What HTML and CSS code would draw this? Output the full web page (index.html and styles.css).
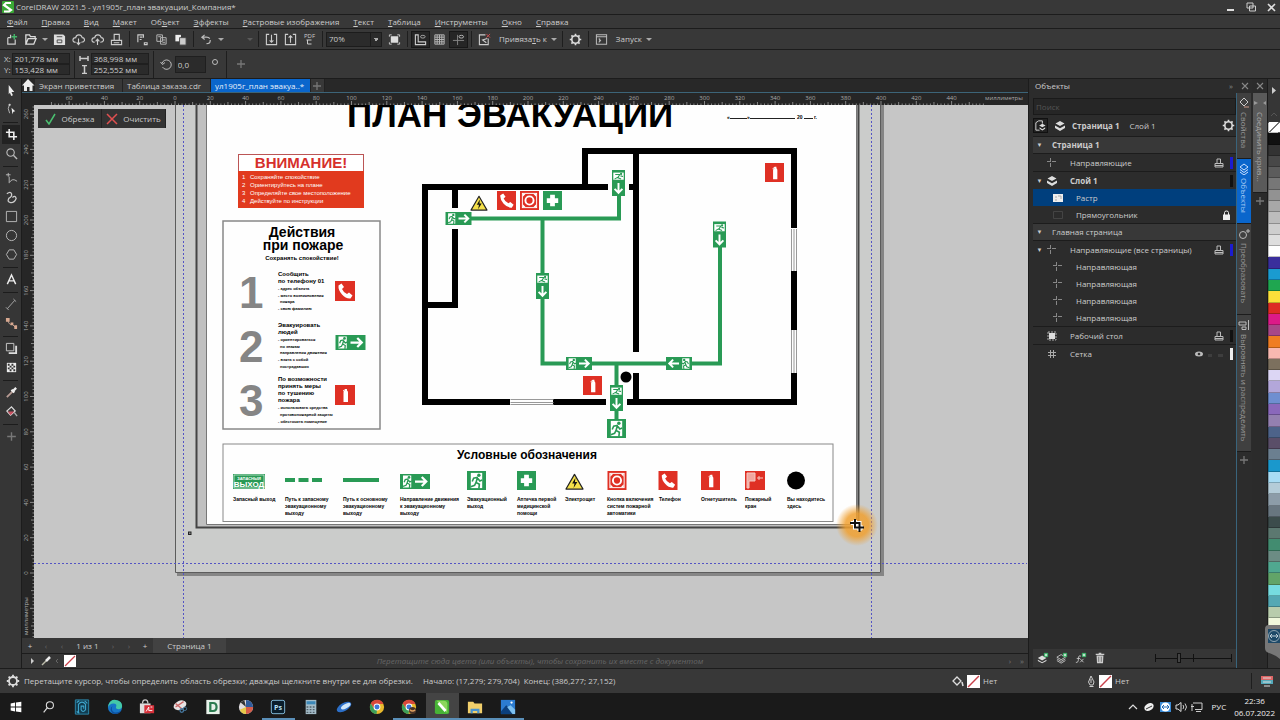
FILE: index.html
```html
<!DOCTYPE html>
<html lang="ru">
<head>
	<meta charset="UTF-8">
	<title>CorelDRAW 2021.5 - ул1905г_план эвакуации_Компания*</title>
	<link rel="stylesheet" href="styles.css">
</head>
<body>
<!-- shared icons -->
<svg class="defs" aria-hidden="true">
	<symbol id="i-gear" viewBox="0 0 14 14"><circle cx="7" cy="7" r="4" fill="none" stroke="#ddd" stroke-width="1.8"/><path d="M7 .8v2M7 11.2v2M.8 7h2M11.2 7h2M2.6 2.6l1.4 1.4M10 10l1.4 1.4M2.6 11.4L4 10M10 4l1.4-1.4" stroke="#ddd" stroke-width="1.8"/></symbol>
	<symbol id="i-none" viewBox="0 0 12 12"><rect width="12" height="12" fill="#fff"/><path d="M1 11L11 1" stroke="#c8404a" stroke-width="1.3"/></symbol>
	<symbol id="i-print" viewBox="0 0 12 12"><path d="M4 6V2h3.500v4M2 6.500h8V10H2zM2 8.500h8" fill="none" stroke="#bbb"/></symbol>
	<symbol id="i-layer" viewBox="0 0 12 12"><path d="M6 1l4.500 2.500L6 6 1.500 3.500zM1 5.500L6 8.300l5-2.800v2.500L6 11 1 8z" fill="#ddd"/></symbol>
	<symbol id="i-guide" viewBox="0 0 12 12"><path d="M1 4.500h9M4.500 1v9" stroke="#888" fill="none" stroke-dasharray="4 1"/></symbol>
	<symbol id="i-plus" viewBox="0 0 12 12"><path d="M6 2v8M2 6h8" stroke="#777" stroke-width="1.300"/></symbol>
	<symbol id="i-x" viewBox="0 0 12 12"><path d="M3 3l6 6M9 3L3 9" stroke="#888" stroke-width="1.100"/></symbol>
	<!-- safety signs -->
	<symbol id="s-man" viewBox="0 0 20 20"><rect width="20" height="20" fill="#299a55"/><path d="M4 2h12v16H4z" fill="#fff"/><circle cx="12.500" cy="4.500" r="1.800" fill="#299a55"/><path d="M11.500 6.500L7 7.500 5.500 11M11 7l-1.500 5 3.500 2-.5 4.500M9.500 12L8 15l-4 1.500M11.500 8l2 2.500 2.500-1" fill="none" stroke="#299a55" stroke-width="1.700"/></symbol>
	<symbol id="s-exit" viewBox="0 0 40 20"><rect width="40" height="20" fill="#299a55"/><path d="M4 2h11v16H4z" fill="#fff"/><circle cx="12" cy="4.500" r="1.800" fill="#299a55"/><path d="M11 6.500L7 7.500 5.500 11M11 7l-1.500 5 3.500 2-.5 4.500M9.500 12L8 15l-4 1.500M11 8l2 2.500 2.500-1" fill="none" stroke="#299a55" stroke-width="1.700"/><path d="M20 10h15M29 4l6 6-6 6" fill="none" stroke="#fff" stroke-width="3"/></symbol>
	<symbol id="s-down" viewBox="0 0 20 40"><rect width="20" height="40" fill="#299a55"/><path d="M2 4h16v11H2z" fill="#fff"/><circle cx="14" cy="6" r="1.700" fill="#299a55"/><path d="M13 7L5 7M12 7l-3 5 5 2M9 11l-5 3M13 9l4 1" fill="none" stroke="#299a55" stroke-width="1.700"/><path d="M10 20v15M4 29l6 6 6-6" fill="none" stroke="#fff" stroke-width="3"/></symbol>
	<symbol id="s-phone" viewBox="0 0 20 20"><rect width="20" height="20" fill="#df3024"/><path d="M3.500 4.500L6.500 2.500 9 6 7 8q1.500 3.500 5 5l2-1.500 3.500 3L15.500 17.500Q11 18 7 13.500 3 9 3.500 4.500z" fill="#fff"/></symbol>
	<symbol id="s-ext" viewBox="0 0 20 20"><rect width="20" height="20" fill="#df3024"/><path d="M8.500 17V7.500Q8.500 5.500 10 5.500V4h2v1.500q1 .5 1 2V17z" fill="#fff"/><path d="M10.500 4.500L8 6" stroke="#fff"/></symbol>
	<symbol id="s-btn" viewBox="0 0 20 20"><rect width="20" height="20" fill="#df3024"/><rect x="2.500" y="2.500" width="15" height="15" fill="none" stroke="#fff"/><circle cx="10" cy="10" r="4.300" fill="none" stroke="#fff" stroke-width="2"/><path d="M3 3h3L3 6zM17 3v3l-3-3zM3 17v-3l3 3zM17 17h-3l3-3z" fill="#fff"/></symbol>
	<symbol id="s-cross" viewBox="0 0 20 20"><rect width="20" height="20" fill="#299a55"/><path d="M7.500 4h5v3.500H16v5h-3.500V16h-5v-3.500H4v-5h3.500z" fill="#fff"/></symbol>
	<symbol id="s-volt" viewBox="0 0 20 18"><path d="M10 1.500L19 17H1z" fill="#f4e04a" stroke="#222" stroke-width="1.300" stroke-linejoin="round"/><path d="M11 5L7.500 11H10l-1 5 4-6.500h-2.500z" fill="#111"/></symbol>
</svg>

<header class="titlebar">
	<svg width="12" height="12" viewBox="0 0 12 12"><rect width="12" height="12" rx="1" fill="#3aa935"/><path d="M9 2H4L2 4l7 5-2 1.500H2" fill="none" stroke="#fff" stroke-width="2.200"/></svg>
	<span class="name">CorelDRAW 2021.5 - ул1905г_план эвакуации_Компания*</span>
	<button aria-label="Свернуть"><svg width="12" height="12"><path d="M2 9h7" stroke="#ddd" stroke-width="2"/></svg></button>
	<button aria-label="Восстановить"><svg width="12" height="12"><path d="M2 2h6v5H2zM4.500 5h6v5h-6z" fill="none" stroke="#ccc"/></svg></button>
	<button aria-label="Закрыть"><svg width="12" height="12"><path d="M3 3l7 7M10 3l-7 7" stroke="#ddd" stroke-width="1.600"/></svg></button>
</header>

<nav class="menubar">
	<a href="#"><u>Ф</u>айл</a>
	<a href="#"><u>П</u>равка</a>
	<a href="#"><u>В</u>ид</a>
	<a href="#"><u>М</u>акет</a>
	<a href="#">Об<u>ъ</u>ект</a>
	<a href="#"><u>Э</u>ффекты</a>
	<a href="#"><u>Р</u>астровые изображения</a>
	<a href="#"><u>Т</u>екст</a>
	<a href="#"><u>Т</u>аблица</a>
	<a href="#"><u>И</u>нструменты</a>
	<a href="#"><u>О</u>кно</a>
	<a href="#"><u>С</u>правка</a>
</nav>

<div class="toolbar">
	<button class="btn" aria-label="Создать"><svg viewBox="0 0 14 14"><path d="M3 5h3V2M3 5v7h8V7" fill="none" stroke="#ccc" stroke-width="1.300"/><path d="M10 1v6M7 4h6" stroke="#45b56a" stroke-width="1.600"/></svg></button>
	<button class="btn" aria-label="Открыть"><svg viewBox="0 0 14 14"><path d="M2 12V2h4l1 2h5v2M2 12l2.500-6H13l-2.500 6z" fill="none" stroke="#ddd" stroke-width="1.400"/></svg></button>
	<button class="caret" aria-label="Последние"></button>
	<button class="btn" aria-label="Сохранить"><svg viewBox="0 0 14 14"><path d="M1 1.500h10L13 3.500V13H1z" fill="#ddd"/><path d="M4 4h6M4.500 7.500h5v3h-5z" stroke="#444" fill="none"/></svg></button>
	<button class="btn" aria-label="Из облака"><svg viewBox="0 0 14 14"><path d="M4 10Q1 10 1 7.500 1 5 4 5q.5-3 3.500-3Q10 2 11 5q2.500 0 2.500 2.500T10 10M7 6v6M5 10l2 2.500L9 10" fill="none" stroke="#ccc" stroke-width="1.200"/></svg></button>
	<button class="btn" aria-label="В облако"><svg viewBox="0 0 14 14"><path d="M4 10Q1 10 1 7.500 1 5 4 5q.5-3 3.500-3Q10 2 11 5q2.500 0 2.500 2.500T10 10M7 13V6.500M5 9l2-2.500L9 9" fill="none" stroke="#ccc" stroke-width="1.200"/></svg></button>
	<button class="btn" aria-label="Печать"><svg viewBox="0 0 14 14"><path d="M4.500 8V1.500H10V8M1.500 8h11v4.500h-11zM4 10.500h6" fill="none" stroke="#ccc" stroke-width="1.200"/></svg></button>
	<i class="sep"></i>
	<button class="btn" aria-label="Вырезать"><svg viewBox="0 0 14 14"><path d="M2 10V2h6v3M4 4.500h3M4 7h2M9 10.500h3v2H9z" fill="none" stroke="#ccc" stroke-width="1.200"/></svg></button>
	<button class="btn" aria-label="Копировать"><svg viewBox="0 0 14 14"><path d="M2 2h6v7H2zM6 5h6v7H6zM3.500 4h3M8 7.500h3M8 10h3" fill="none" stroke="#bbb"/></svg></button>
	<button class="btn" aria-label="Вставить"><svg viewBox="0 0 14 14"><path d="M1.500 2h6v7h-6z" fill="#eee"/><path d="M6 5h7v8H6z" fill="#ccc" stroke="#444"/></svg></button>
	<i class="sep"></i>
	<button class="btn" aria-label="Отменить"><svg viewBox="0 0 14 14"><path d="M2 4.500h5q4 0 4 3.500t-4 3.500M5 2L2 4.500 5 7" fill="none" stroke="#bbb" stroke-width="1.300" stroke-dasharray="9 1.500"/></svg></button>
	<button class="caret" aria-label="История"></button>
	<button class="btn" disabled aria-label="Повторить"></button>
	<button class="caret dim" disabled aria-label="История повторов"></button>
	<i class="sep"></i>
	<button class="btn" aria-label="Импорт"><svg viewBox="0 0 14 14"><path d="M4.500 1.500h-3v11h11v-11h-3M7 2v8M5 8l2 2 2-2" fill="none" stroke="#ccc" stroke-width="1.200"/></svg></button>
	<button class="btn" aria-label="Экспорт"><svg viewBox="0 0 14 14"><path d="M4.500 1.500h-3v11h11v-11h-3M7 10.500V3M5 5l2-2 2 2" fill="none" stroke="#ccc" stroke-width="1.200"/></svg></button>
	<button class="btn pdf" aria-label="Публикация">PDF<svg viewBox="0 0 12 6"><path d="M3 1h5M4 1v4h4" fill="none" stroke="#ccc"/></svg></button>
	<i class="sep"></i>
	<select class="zoom" aria-label="Масштаб"><option>70%</option><option>100%</option></select>
	<button class="btn" aria-label="Во весь экран"><svg viewBox="0 0 14 14"><path d="M3 3.500h8v7H3z" fill="#ddd"/><path d="M1.500 4V2H4M10 2h2.500v2M12.500 10v2H10M4 12H1.500v-2" fill="none" stroke="#ccc"/></svg></button>
	<i class="sep"></i>
	<button class="btn on" aria-label="Линейки"><svg viewBox="0 0 14 14"><path d="M1.500 2h3v7.500h8v3h-11z" fill="none" stroke="#ccc" stroke-width="1.200"/><ellipse cx="9.500" cy="4" rx="2.500" ry="1.500" fill="none" stroke="#aaa"/></svg></button>
	<button class="btn" aria-label="Сетка"><svg viewBox="0 0 14 14"><path d="M2 2h10v10H2zM4.500 2v10M7 2v10M9.500 2v10M2 4.500h10M2 7h10M2 9.500h10" fill="none" stroke="#bbb"/></svg></button>
	<button class="btn on" aria-label="Направляющие"><svg viewBox="0 0 14 14"><path d="M1 8h12M6 2v11" stroke="#888"/><ellipse cx="10" cy="4" rx="2.500" ry="1.500" fill="none" stroke="#bbb"/></svg></button>
	<i class="sep"></i>
	<button class="btn" aria-label="Отключить привязку"><svg viewBox="0 0 14 14"><path d="M11 6v6.500H1.500V2H8M10 6L5 7.500l4 3" fill="none" stroke="#ccc" stroke-width="1.200"/><path d="M9 1l4 4M13 1L9 5" stroke="#d05050"/></svg></button>
	<button class="text">Привяза<u>т</u>ь к</button>
	<button class="caret" aria-label="Варианты привязки"></button>
	<i class="sep"></i>
	<button class="btn" aria-label="Параметры"><svg><use href="#i-gear"/></svg></button>
	<i class="sep"></i>
	<button class="btn" aria-label="Скрипт"><svg viewBox="0 0 14 14"><path d="M1.500 2h11v10h-11zM1.500 4h11M4 6l2 2-2 2M5 6v3" fill="none" stroke="#bbb" stroke-width="1.100"/></svg></button>
	<button class="text">Запуск</button>
	<button class="caret" aria-label="Запуск, варианты"></button>
</div>

<div class="props">
	<div class="pair">
		<label>X: <input value="201,778 мм"></label>
		<label>Y: <input value="153,428 мм"></label>
	</div>
	<i class="sep"></i>
	<div class="pair">
		<label><svg width="10" height="9" role="img" aria-label="Ширина"><path d="M1 2v5M9 2v5M1 4.500h8" stroke="#ccc" fill="none" stroke-width="1.500"/></svg><input value="368,998 мм"></label>
		<label><svg width="10" height="9" role="img" aria-label="Высота"><path d="M3 .5h5M3 8.500h5M5.500 1v7" stroke="#ccc" fill="none" stroke-width="1.500"/></svg><input value="252,552 мм"></label>
	</div>
	<i class="sep"></i>
	<label class="angle"><svg width="13" height="13" role="img" aria-label="Угол"><path d="M2.500 9A4.700 4.700 0 1 0 2 5.500M.5 4l2 2.500L5 4.500" fill="none" stroke="#bbb"/></svg><input value="0,0"></label>
	<svg width="12" height="18"><circle cx="5" cy="7" r="2.500" fill="none" stroke="#bbb"/></svg>
	<i class="sep"></i>
	<button class="add" aria-label="Добавить"><svg width="12" height="12"><use href="#i-plus"/></svg></button>
</div>

<main class="work">
	<div class="toolbox">
		<button aria-label="Указатель"><svg viewBox="0 0 14 14"><path d="M4 1l6 7.500-3 .2 1.500 3.500-1.800.8-1.400-3.500L4 11z" fill="#eee"/></svg></button>
		<button aria-label="Форма"><svg viewBox="0 0 14 14"><path d="M5 1Q2 6 5 11" fill="none" stroke="#bbb"/><path d="M7 5l4 4-2 .5L8 12z" fill="#eee"/><circle cx="5" cy="2" r="1.200" fill="#ccc"/></svg></button>
		<hr>
		<button class="on" aria-label="Обрезка"><svg viewBox="0 0 14 14"><path d="M4.500 1v8.500H13M1 4.500h8.500V13" fill="none" stroke="#eee" stroke-width="1.700"/></svg></button>
		<button aria-label="Масштаб"><svg viewBox="0 0 14 14"><circle cx="6" cy="6" r="4" fill="none" stroke="#bbb" stroke-width="1.200"/><path d="M9 9l4 4" stroke="#bbb" stroke-width="1.500"/></svg></button>
		<hr>
		<button aria-label="Свободная форма"><svg viewBox="0 0 14 14"><path d="M1 3h5M3.500 1v4M4.500 5v7M5 11q3-5 8-1" fill="none" stroke="#bbb"/></svg></button>
		<button aria-label="Художественное оформление"><svg viewBox="0 0 14 14"><path d="M2 3q4-3 5 0T4 8q-2 4 2 4.500t6-4.500Q11 4 8 7" fill="none" stroke="#ccc" stroke-width="1.400"/></svg></button>
		<button aria-label="Прямоугольник"><svg viewBox="0 0 14 14"><path d="M1.500 1.500h11v11h-11z" fill="none" stroke="#bbb"/></svg></button>
		<button aria-label="Эллипс"><svg viewBox="0 0 14 14"><circle cx="7" cy="7" r="5.500" fill="none" stroke="#bbb"/></svg></button>
		<button aria-label="Многоугольник"><svg viewBox="0 0 14 14"><path d="M4.500 2h5l3 5-3 5h-5l-3-5z" fill="none" stroke="#bbb"/></svg></button>
		<hr>
		<button aria-label="Текст"><svg viewBox="0 0 14 14"><path d="M2.500 12L7 2l4.500 10M4 8.500h6" fill="none" stroke="#eee" stroke-width="1.500"/></svg></button>
		<hr>
		<button aria-label="Размер"><svg viewBox="0 0 14 14"><path d="M2.500 11.500l8-9M1 10l3 3M9 1l3 3" stroke="#aaa"/></svg></button>
		<button aria-label="Соединитель"><svg viewBox="0 0 14 14"><path d="M3 3q1 6 5 5l3 3" fill="none" stroke="#c9a898"/><path d="M1 1h4v4H1zM10 9h3v4h-3zM6 6h3v3H6z" fill="#d8a890"/></svg></button>
		<hr>
		<button aria-label="Тень"><svg viewBox="0 0 14 14"><path d="M1.500 1.500h8v8h-8z" fill="none" stroke="#ccc"/><path d="M4 12h8V4" fill="none" stroke="#ddd" stroke-width="2"/></svg></button>
		<button aria-label="Прозрачность"><svg viewBox="0 0 14 14"><path d="M2 2h10v10H2z" fill="#eee"/><path d="M3 3h2v2H3zM7 3h2v2H7zM5 5h2v2H5zM9 5h2v2H9zM3 7h2v2H3zM7 7h2v2H7zM5 9h2v2H5zM9 9h2v2H9z" fill="#333"/></svg></button>
		<hr>
		<button aria-label="Пипетка"><svg viewBox="0 0 14 14"><path d="M2 12l6-6" stroke="#b89c94" stroke-width="2"/><path d="M7 4l3 3M8 6l4-4" stroke="#eee" stroke-width="2.500"/></svg></button>
		<button aria-label="Заливка"><svg viewBox="0 0 14 14"><path d="M7 2l4 4.500-5 4.500-4-4.500z" fill="none" stroke="#ddd" stroke-width="1.300"/><path d="M3 7h7l-4 4z" fill="#c95060"/><path d="M10 8l3 4" stroke="#aaa" stroke-width="1.500"/></svg></button>
		<hr>
		<button aria-label="Настроить"><svg viewBox="0 0 12 12"><use href="#i-plus"/></svg></button>
	</div>

	<section class="document">
		<div class="tabs">
			<svg width="13" height="12" class="home"><path d="M0 6.500L6 0l6.500 6.500h-2V12H7.500V8H5v4H2V6.500z" fill="#eee"/></svg>
			<button class="tab">Экран приветствия</button>
			<button class="tab">Таблица заказа.cdr</button>
			<button class="tab current">ул1905г_план эвакуа..*</button>
			<button class="tab new" aria-label="Новый документ"><svg width="12" height="12"><use href="#i-plus"/></svg></button>
		</div>
		<svg class="ruler-h"><g id="ruler-h" transform="translate(-22 0)"></g></svg>
		<div class="view">
			<svg class="ruler-v"><g id="ruler-v" transform="translate(0 -105)"></g></svg>
			<div class="canvas">
				<svg class="drawing">
				<g transform="translate(-34 -105)">
					<!-- page and its shadow -->
					<path d="M882.500 105v469.500H177" fill="none" stroke="#858585" stroke-width="3"/>
					<path d="M175.500 90h705v482.500h-705z" fill="#cbcccb" stroke="#5c5c5c"/>
					<path d="M196.500 90h662v437.500h-662z" fill="#c0c0c0" stroke="#444" stroke-width="2"/>
					<path d="M206.500 90h650v434.500h-650z" fill="#fefefe" stroke="#777"/>
					<path d="M183.500 105v533M871.500 105v533M34 563.500h993" class="guide"/>

					<text x="347" y="127" class="arial b" font-size="35">ПЛАН ЭВАКУАЦИИ</text>
					<path d="M730 118.500h17M750 118.500h45M804 118.500h9" stroke="#222"/>
					<g class="arial b" font-size="5"><text x="727" y="119">«</text><text x="747" y="119">»</text><text x="797" y="119">20</text><text x="814" y="119">г.</text></g>

					<rect x="238.500" y="154.500" width="125" height="53" fill="#fff" stroke="#b55"/>
					<rect x="238" y="171" width="126" height="37" fill="#e13a1e"/>
					<text x="301" y="168" class="arial b mid" font-size="15" fill="#d6302c">ВНИМАНИЕ!</text>
					<g class="arial" font-size="6" fill="#fff">
						<text x="242" y="179">1</text><text x="250" y="179">Сохраняйте спокойствие</text>
						<text x="242" y="187">2</text><text x="250" y="187">Ориентируйтесь на плане</text>
						<text x="242" y="195">3</text><text x="250" y="195">Определяйте свое местоположение</text>
						<text x="242" y="203">4</text><text x="250" y="203">Действуйте по инструкции</text>
					</g>

					<rect x="223" y="221" width="157" height="208" fill="none" stroke="#888" stroke-width="1.500"/>
					<g class="arial b mid">
						<text x="302" y="237" font-size="14">Действия</text>
						<text x="303" y="250" font-size="14">при пожаре</text>
						<text x="302" y="260" font-size="6">Сохранять спокойствие!</text>
					</g>
					<g class="arial b" font-size="44" fill="#858585"><text x="239" y="308">1</text><text x="239" y="362">2</text><text x="239" y="416">3</text></g>
					<g class="arial b" font-size="6">
						<text x="278" y="276">Сообщить</text><text x="278" y="283">по телефону 01</text>
						<text x="278" y="327">Эвакуировать</text><text x="278" y="334">людей</text>
						<text x="278" y="381">По возможности</text><text x="278" y="388">принять меры</text><text x="278" y="395">по тушению</text><text x="278" y="402">пожара</text>
					</g>
					<g class="arial b" font-size="4">
						<text x="278" y="290">- адрес объекта</text><text x="278" y="297">- место возникновения</text><text x="280" y="303">пожара</text><text x="278" y="310">- свою фамилию</text>
						<text x="278" y="341">- ориентироваться</text><text x="280" y="348">по знакам</text><text x="280" y="354">направления движения</text><text x="278" y="361">- взять с собой</text><text x="280" y="368">пострадавших</text>
						<text x="278" y="409">- использовать средства</text><text x="280" y="416">противопожарной защиты</text><text x="278" y="423">- обесточить помещение</text>
					</g>
					<use href="#s-phone" x="335" y="281" width="20" height="20"/>
					<use href="#s-exit" x="335" y="335" width="31" height="15"/>
					<use href="#s-ext" x="335" y="385" width="20" height="20"/>

					<!-- walls -->
					<path d="M608 187H425v215h85M553 402h53M627 402h170M794 405v-32M794 330v-59M794 228v-77H585v33M636 151v201M636 373v29M629 187h7M455 187v21M455 229v76h-30" fill="none" stroke="#000" stroke-width="6"/>
					<path d="M510.500 399.500h43M510.500 402.500h43M510.500 404.500h43M791.500 229v42M794 229v42M796.500 229v42M791.500 330v43M794 330v43M796.500 330v43" stroke="#999" fill="none"/>
					<!-- evacuation routes -->
					<path d="M460 218.500h159V180M542.500 218v145.500H720V235M616.500 363v65" fill="none" stroke="#299a55" stroke-width="4"/>
					<use href="#s-exit" x="445" y="212" width="27" height="13"/>
					<use href="#s-down" x="612" y="170" width="13" height="26"/>
					<use href="#s-down" x="536" y="273" width="13" height="26"/>
					<use href="#s-down" x="713" y="221" width="13" height="27"/>
					<use href="#s-exit" x="566" y="357" width="26" height="13"/>
					<use href="#s-exit" width="26" height="13" transform="translate(692 357) scale(-1 1)"/>
					<use href="#s-down" x="610" y="385" width="13" height="26"/>
					<use href="#s-man" x="607" y="419" width="19" height="19"/>
					<use href="#s-volt" x="470" y="195" width="18" height="16"/>
					<use href="#s-phone" x="497" y="191" width="19" height="19"/>
					<use href="#s-btn" x="520" y="191" width="19" height="19"/>
					<use href="#s-cross" x="543" y="191" width="19" height="19"/>
					<use href="#s-ext" x="765" y="163" width="19" height="19"/>
					<use href="#s-ext" x="583" y="376" width="19" height="19"/>
					<circle cx="626" cy="377" r="5.500"/>

					<!-- legend -->
					<rect x="223" y="444" width="610" height="77.500" fill="none" stroke="#888"/>
					<text x="527" y="459" class="arial b mid" font-size="12">Условные обозначения</text>
					<rect x="233" y="474" width="32" height="15" fill="#299a55"/>
					<rect x="234" y="475" width="30" height="13" fill="none" stroke="#fff" stroke-width=".6"/>
					<g class="arial b mid" fill="#fff"><text x="249" y="480" font-size="4">ЗАПАСНЫЙ</text><text x="249" y="487" font-size="8">ВЫХОД</text></g>
					<path d="M285 480h38" stroke="#299a55" stroke-width="4" stroke-dasharray="10 3.500"/>
					<path d="M343 480h36" stroke="#299a55" stroke-width="4"/>
					<use href="#s-exit" x="400" y="474" width="30" height="15"/>
					<use href="#s-man" x="467" y="471" width="19" height="19"/>
					<use href="#s-cross" x="517" y="471" width="19" height="19"/>
					<use href="#s-volt" x="565" y="473" width="19" height="17"/>
					<use href="#s-btn" x="607" y="471" width="20" height="19"/>
					<use href="#s-phone" x="658" y="471" width="20" height="19"/>
					<use href="#s-ext" x="701" y="471" width="19" height="19"/>
					<rect x="745" y="471" width="20" height="19" fill="#df3024"/>
					<path d="M747 473h8v8h-6v7h-2zM757 478h6M759 476v4" fill="#f0a8a0" stroke="#f6c8c0"/>
					<circle cx="796" cy="480.500" r="9"/>
					<g class="arial b" font-size="5">
						<text x="233" y="501">Запасный выход</text>
						<text x="285" y="501">Путь к запасному</text><text x="285" y="508">эвакуационному</text><text x="285" y="515">выходу</text>
						<text x="343" y="501">Путь к основному</text><text x="343" y="508">эвакуационному</text><text x="343" y="515">выходу</text>
						<text x="400" y="501">Направление движения</text><text x="400" y="508">к эвакуационному</text><text x="400" y="515">выходу</text>
						<text x="467" y="501">Эвакуационный</text><text x="467" y="508">выход</text>
						<text x="517" y="501">Аптечка первой</text><text x="517" y="508">медицинской</text><text x="517" y="515">помощи</text>
						<text x="565" y="501">Электрощит</text>
						<text x="607" y="501">Кнопка включения</text><text x="607" y="508">систем пожарной</text><text x="607" y="515">автоматики</text>
						<text x="659" y="501">Телефон</text>
						<text x="701" y="501">Огнетушитель</text>
						<text x="745" y="501">Пожарный</text><text x="745" y="508">кран</text>
						<text x="787" y="501">Вы находитесь</text><text x="787" y="508">здесь</text>
					</g>

					<rect x="188.500" y="532" width="2.500" height="2.500" fill="#888" stroke="#222"/>
					<!-- pointer -->
					<radialGradient id="glow"><stop offset=".55" stop-color="#f0a030" stop-opacity=".85"/><stop offset="1" stop-color="#f0a030" stop-opacity="0"/></radialGradient>
					<circle cx="857" cy="525" r="21" fill="url(#glow)"/>
					<path d="M855 520v7.500h8M851 523h8.500v8" fill="none" stroke="#fff" stroke-width="4"/>
					<path d="M855 519v8.500h9M850 523h9.500v9" fill="none" stroke="#111" stroke-width="2"/>
				</g>
				</svg>
				<div class="crop-bar">
					<button><svg width="12" height="12"><path d="M1 7l3 4 6-10" fill="none" stroke="#4ac070" stroke-width="1.500"/></svg>Обрезка</button>
					<button><svg width="12" height="12"><path d="M1 1l10 10M11 1L1 11" stroke="#e05050" stroke-width="1.500"/></svg>Очистить</button>
				</div>
			</div>
		</div>
		<div class="pages">
			<button aria-label="Добавить страницу в начало">+</button>
			<button class="dim" aria-label="Первая">‹</button>
			<button class="dim" aria-label="Назад">‹</button>
			<span class="count">1 из 1</span>
			<button class="dim" aria-label="Вперед">›</button>
			<button class="dim" aria-label="Последняя">›</button>
			<button aria-label="Добавить страницу">+</button>
			<button class="page-tab">Страница 1</button>
		</div>
		<div class="doc-palette">
			<svg width="42" height="12"><path d="M9 3l3 3-3 3z" fill="#ccc"/><path d="M20 10l5-5" stroke="#bba" stroke-width="1.500"/><path d="M24 6l4-4" stroke="#eee" stroke-width="2.500"/><path d="M36 4l-2 2 2 2" fill="none" stroke="#666"/></svg>
			<svg width="12" height="12"><use href="#i-none"/></svg>
			<span>Перетащите сюда цвета (или объекты), чтобы сохранить их вместе с документом</span>
			<button aria-label="Прокрутка">›</button>
			<button aria-label="Развернуть">»</button>
		</div>
	</section>

	<aside class="docker">
		<div class="docker-head"><h2>Объекты</h2><button aria-label="Свернуть панель">»</button><button aria-label="Закрыть панель"><svg width="12" height="12"><use href="#i-x"/></svg></button></div>
		<div class="docker-body">
			<div class="panel">
				<input class="search" type="search" placeholder="Поиск" aria-label="Поиск">
				<div class="layer-bar">
					<button class="on" aria-label="Слои страницы"><svg viewBox="0 0 14 14"><path d="M6 12H2V4l3-2h4v3" fill="none" stroke="#ddd"/><path d="M9 5l3.500 2L9 9 5.500 7zM6 9l3 2 3-2v1.500l-3 2-3-2z" fill="#ddd"/></svg></button>
					<svg width="12" height="12"><use href="#i-layer"/></svg>
					<b>Страница 1</b><span>Слой 1</span>
					<button aria-label="Настройки"><svg><use href="#i-gear"/></svg></button>
				</div>
				<ul class="tree">
					<li class="page"><i class="tw">▼</i><b>Страница 1</b></li>
					<li class="ruled"><i class="tw"></i><svg class="ic"><use href="#i-guide"/></svg><span>Направляющие</span><svg class="ic"><use href="#i-print"/></svg><em class="blue"></em></li>
					<li><i class="tw">▼</i><svg class="ic"><use href="#i-layer"/></svg><b>Слой 1</b><em class="black"></em></li>
					<li class="child selected"><svg class="ic" viewBox="0 0 12 12"><path d="M1 2h10v8H1z" fill="#eee"/><path d="M3 5h2M6 4h3v3M3 8h2" stroke="#aaa" fill="none"/></svg><span>Растр</span></li>
					<li class="child ruled"><svg class="ic" viewBox="0 0 12 12"><path d="M1.500 2.500h9v7h-9z" fill="none" stroke="#444"/></svg><span>Прямоугольник</span><svg class="ic lock" viewBox="0 0 12 12"><path d="M3 5.500h7V11H3z" fill="#eee"/><path d="M4.500 6V3.500q0-1.500 2-1.500t2 1.500V6" fill="none" stroke="#eee"/></svg></li>
					<li class="page"><i class="tw">▼</i><span>Главная страница</span></li>
					<li><i class="tw">▼</i><svg class="ic"><use href="#i-guide"/></svg><span>Направляющие (все страницы)</span><svg class="ic"><use href="#i-print"/></svg><em class="blue"></em></li>
					<li class="child"><svg class="ic"><use href="#i-guide"/></svg><span>Направляющая</span></li>
					<li class="child"><svg class="ic"><use href="#i-guide"/></svg><span>Направляющая</span></li>
					<li class="child"><svg class="ic"><use href="#i-guide"/></svg><span>Направляющая</span></li>
					<li class="child ruled"><svg class="ic"><use href="#i-guide"/></svg><span>Направляющая</span></li>
					<li class="ruled"><i class="tw"></i><svg class="ic" viewBox="0 0 12 12"><path d="M3 3h6v6H3z" fill="#ddd"/><path d="M2 2h8v8H2z" fill="none" stroke="#aaa" stroke-dasharray="2 1"/></svg><span>Рабочий стол</span><svg class="ic"><use href="#i-print"/></svg><em class="black"></em></li>
					<li><i class="tw"></i><svg class="ic" viewBox="0 0 12 12"><path d="M4.500 2v8M7.500 2v8M2 4.500h8M2 7.500h8" stroke="#aaa"/></svg><span>Сетка</span><svg class="eye" viewBox="0 0 32 12"><ellipse cx="6" cy="6" rx="4" ry="2.500" fill="#bbb"/><circle cx="6" cy="6" r="1.300" fill="#333"/><path d="M15 6h4v3h-4zM25 6h5v3h-5z" fill="#3e3e3e"/></svg><em class="white"></em></li>
				</ul>
				<div class="panel-foot">
					<button aria-label="Новый слой"><svg viewBox="0 0 14 14"><path d="M6 4l5 3-5 3-5-3zM1 9l5 3 5-3v1.500L6 13l-5-2.500z" fill="#ddd"/><path d="M8 1h5v5H8z" fill="#35a860"/><path d="M10.500 2v3M9 3.500h3" stroke="#fff"/></svg></button>
					<button aria-label="Новый слой на главной странице"><svg viewBox="0 0 14 14"><path d="M6 3l5 3-5 3-5-3zM1 8l5 3 5-3M1 10l5 3 5-3" fill="none" stroke="#ccc"/><path d="M8 1h5v5H8z" fill="#35a860"/><path d="M10.500 2v3M9 3.500h3" stroke="#fff"/></svg></button>
					<button aria-label="Эффект"><svg viewBox="0 0 14 14"><path d="M1 12q3 1 3-4t3-3M2 7.500h4M6 8l4 4M10 8l-4 4" fill="none" stroke="#ccc"/><path d="M8 1h5v5H8z" fill="#35a860"/><path d="M10.500 2v3M9 3.500h3" stroke="#fff"/></svg></button>
					<button aria-label="Удалить"><svg viewBox="0 0 14 14"><path d="M3 4h8l-.5 9h-7zM2 2h10v1.500H2zM5.500 1h3v1h-3z" fill="#ccc"/><path d="M5.500 5.500v6M8.500 5.500v6" stroke="#666"/></svg></button>
					<input type="range" aria-label="Размер миниатюр" value="30">
				</div>
			</div>
			<div class="side-tabs">
				<button><svg width="12" height="12"><path d="M6 1l4 4-4 4-4-4z" fill="none" stroke="#ccc"/><path d="M6 10h5" stroke="#c98"/></svg>Свойства</button>
				<button class="current"><svg width="12" height="12"><path d="M6 1l4 3-4 3-4-3zM2 6.500l4 3 4-3M2 9l4 3 4-3" fill="none" stroke="#cfe2ff"/></svg>Объекты</button>
				<button><svg width="12" height="12"><circle cx="5" cy="7" r="3.500" fill="none" stroke="#bbb"/><path d="M10 1v4M8 3h4" stroke="#bbb"/></svg>Преобразовать</button>
				<button><svg width="12" height="12"><path d="M10.500 1v10M1 3h7v3H1zM4 8h4v2.500H4z" fill="none" stroke="#bbb"/></svg>Выровнять и распределить</button>
				<button class="more" aria-label="Добавить панель"><svg width="12" height="12"><use href="#i-plus"/></svg></button>
			</div>
		</div>
	</aside>
	<div class="side-tabs second">
		<button class="close" aria-label="Закрыть"><svg width="12" height="12"><use href="#i-x"/></svg></button>
		<button class="light"><svg width="12" height="12"><path d="M0 4l4 2-4 2zM12 4L9 6l3 2z" fill="#999"/></svg>Соединить крив...</button>
		<button class="more" aria-label="Добавить панель"><svg width="12" height="12"><use href="#i-plus"/></svg></button>
	</div>
	<div class="palette">
		<svg width="12" height="43"><path d="M4 8l4 3.500-4 3.500z" fill="#ccc"/><path d="M3 37l3-3 3 3" fill="none" stroke="#555"/></svg>
		<div id="swatches"></div>
		<svg class="viewer" width="16" height="36" aria-hidden="true"><path d="M5 1h11v34q-5-4-11-6-4-1-4-5V5q0-4 4-4z" fill="#777"/><path d="M4 5h12v14H4z" fill="#1d4968"/><circle cx="10" cy="12" r="5.500" fill="none" stroke="#90a4b0"/><path d="M6 12h8M8 10l-2 2 2 2M12 10l2 2-2 2" fill="none" stroke="#c0d0d8"/></svg>
	</div>
</main>

<footer class="status">
	<svg width="14" height="14"><use href="#i-gear"/></svg>
	<span class="hint">Перетащите курсор, чтобы определить область обрезки; дважды щелкните внутри ее для обрезки.</span>
	<span class="coords">Начало: (17,279; 279,704)&nbsp; Конец: (386,277; 27,152)</span>
	<div class="ink"><svg width="12" height="13"><path d="M5 2l4 4-4 4-4-4z" fill="none" stroke="#ddd" stroke-width="1.300"/><path d="M10 7l1 4" stroke="#ddd" stroke-width="1.500"/></svg><svg width="13" height="13"><use href="#i-none"/></svg>Нет</div>
	<div class="ink"><svg width="10" height="13"><path d="M5 1L2.500 7 4 10h3l1-3zM5 4v4M3.500 11.500h4" fill="none" stroke="#ccc"/></svg><svg width="13" height="13"><use href="#i-none"/></svg>Нет</div>
	<i class="sep"></i>
	<svg width="14" height="14"><path d="M1 2h12v4H1z" fill="#d66"/><path d="M1 6h12v4H1z" fill="#5ab"/><path d="M4 12h6M3 4h8M3 8h8" stroke="#ddd"/></svg>
</footer>

<div class="taskbar">
	<div class="apps">
		<button aria-label="Пуск"><svg viewBox="0 0 18 18"><path d="M3 5l5-1v4.500H3zM9 4l6-1v5.500H9zM3 9.500h5V14l-5-1zM9 9.500h6V15l-6-1z" fill="#fff"/></svg></button>
		<button aria-label="Поиск"><svg viewBox="0 0 18 18"><circle cx="10" cy="7" r="4" fill="none" stroke="#ddd" stroke-width="1.200"/><path d="M7 10l-4 5" stroke="#ddd" stroke-width="1.300"/></svg></button>
		<button aria-label="Rhino"><svg viewBox="0 0 18 18"><path d="M1.500 1h15v16h-15z" fill="#123c50" stroke="#2d8fb5"/><path d="M5 15V6q4-5 8 0v6q-3 4-5 0V8h3v3M3 4l3-2M12 2l3 3M3 14l3 2" fill="none" stroke="#3fa6cc" stroke-width="1.200"/></svg></button>
		<button aria-label="Edge"><svg viewBox="0 0 18 18"><circle cx="9" cy="9" r="8" fill="#1676c8"/><path d="M1.500 7Q4 0 10 1q7 1 7 7 0 3.500-4 3.500-3 0-3-2Q12 5 7 5 3 5 1.500 9z" fill="#43c9a8"/><path d="M6 8q-2 5 2 7 4 1 8-2-2 4-7 4-4-1-5-5 0-2 2-4z" fill="#0d4e9c"/></svg></button>
		<button aria-label="PDF"><svg viewBox="0 0 18 18"><path d="M1 5h12v11H1z" fill="#ddd"/><path d="M4 5q0-4 3-4t3 4" fill="none" stroke="#ccc" stroke-width="1.500"/><path d="M6 7h11v9H6z" fill="#d8303a"/><path d="M8 14l3-5v4h4M13 9h2" fill="none" stroke="#fff"/></svg></button>
		<button aria-label="Ножницы"><svg viewBox="0 0 18 18"><ellipse cx="9" cy="7" rx="7.500" ry="5" fill="#e8e4e4" transform="rotate(-25 9 7)"/><path d="M4 9l9-6M4 5l7 6" stroke="#c66" stroke-width="1.500"/><circle cx="11" cy="13" r="2" fill="none" stroke="#4779a0" stroke-width="1.500"/><circle cx="14.500" cy="11" r="2" fill="none" stroke="#4779a0"/></svg></button>
		<button aria-label="DWG"><svg viewBox="0 0 18 18"><path d="M1.500 1h15v16h-15z" fill="#e8f2ea"/><path d="M6 4.500h3q4 0 4 4.500t-4 4.500H6z" fill="none" stroke="#2c7c50" stroke-width="2.500"/></svg></button>
		<button aria-label="Браузер"><svg viewBox="0 0 18 18"><circle cx="9" cy="9" r="8" fill="#e0dce0"/><path d="M9 9V1a8 8 0 0 1 8 8z" fill="#315c9c"/><path d="M9 9h8a8 8 0 0 1-8 8z" fill="#d65b48"/><path d="M9 9v8a8 8 0 0 1-7-5z" fill="#e6c94a"/><path d="M9 9L3 4l4-3z" fill="#333"/></svg></button>
		<button class="run" aria-label="Photoshop"><svg viewBox="0 0 18 18"><rect x="1.500" y="1.500" width="15" height="15" rx="2" fill="#0a1e2c" stroke="#8cc8e8"/><text x="9" y="12" class="ps">Ps</text></svg></button>
		<button aria-label="Калькулятор"><svg viewBox="0 0 18 18"><path d="M3 1h12v16H3z" fill="#a4bcc8"/><path d="M4 2.500h10V6H4z" fill="#3c88b8"/><path d="M4 9h10M4 12h10M4 15h10" stroke="#51606a" stroke-dasharray="2 1.500" stroke-width="1.500"/></svg></button>
		<button aria-label="Просмотр"><svg viewBox="0 0 18 18"><ellipse cx="9" cy="9" rx="9" ry="4.500" fill="#2c6fc8" transform="rotate(-30 9 9)"/><ellipse cx="11" cy="8" rx="6" ry="2.500" fill="#cfe6fa" transform="rotate(-30 11 8)"/></svg></button>
		<button aria-label="Chrome"><svg viewBox="0 0 18 18"><g id="chrome"><circle cx="9" cy="9" r="8" fill="#e9b92c"/><path d="M2 5a8 8 0 0 1 14.200 0.500H9L6 11z" fill="#d9483b"/><path d="M2 5l4.500 7.500L9 12.500 8.500 17A8 8 0 0 1 2 5z" fill="#3ca05a"/><circle cx="9" cy="9" r="3.800" fill="#fff"/><circle cx="9" cy="9" r="2.800" fill="#3f78d8"/></g></svg></button>
		<button class="run" aria-label="Chrome, профиль"><svg viewBox="0 0 18 18"><use href="#chrome"/><circle cx="13" cy="13" r="4" fill="#4a3428"/><path d="M10 12q3 3 6 0" stroke="#e0a060" stroke-width="1.500" fill="none"/></svg></button>
		<button class="run front" aria-label="CorelDRAW"><svg viewBox="0 0 18 18"><rect x="1" y="1" width="16" height="16" rx="2" fill="#47b336"/><path d="M3 2l12 14V6q0-4-4-4z" fill="#8bd75c"/><path d="M5 4.500l8 9" stroke="#fff" stroke-width="3"/></svg></button>
		<button class="run" aria-label="Проводник"><svg viewBox="0 0 18 18"><path d="M1 3h6l1.500 2H17v11H1z" fill="#f1cf6b"/><path d="M4 16v-5h10v5h-2.500v-2.500h-5V16z" fill="#4a94cf"/></svg></button>
		<button class="run" aria-label="Фотографии"><svg viewBox="0 0 18 18"><path d="M1 1h16v16H1z" fill="#2c7cd0"/><path d="M1 14l6-7 10 10H1z" fill="#0b3f7c"/><path d="M8 9l4-2 5 5v5h-3z" fill="#7cc0f0"/><circle cx="13" cy="4" r="1.300" fill="#fff"/></svg></button>
	</div>
	<div class="tray">
		<svg width="14" height="14"><path d="M3 9l4-4 4 4" fill="none" stroke="#ddd" stroke-width="1.200"/></svg>
		<svg width="14" height="14"><ellipse cx="7" cy="7" rx="5" ry="3.500" fill="#eee" transform="rotate(-30 7 7)"/><path d="M4 9l6-3" stroke="#333"/></svg>
		<svg width="14" height="14"><path d="M2 2h11v10H2z" fill="#3a8bd6"/><circle cx="7.500" cy="7" r="4.500" fill="#fff"/><path d="M4 7h7M6 5L4 7l2 2M9 5l2 2-2 2" stroke="#2268b0" fill="none"/></svg>
		<svg width="14" height="14"><path d="M2 5h2l3-2.500v9L4 9H2z" fill="none" stroke="#ddd"/><path d="M9 5q1.500 2 0 4M11 3.500q3 3.500 0 7" fill="none" stroke="#ccc"/></svg>
		<svg width="14" height="14"><path d="M3 3h9v6.500H5M6 11.500h5M2 4v7M1 6.500h3" fill="none" stroke="#ccc"/></svg>
		<span class="lang">РУС</span>
		<time>22:36<br>06.07.2022</time>
	</div>
</div>

<script type="text/javascript">
	var NS = "http://www.w3.org/2000/svg";
	var step = 35.3;	// 20 mm at 70%

	function add(parent, name, attrs, text){
		var el = document.createElementNS(NS, name);
		for(var k in attrs){
			el.setAttribute(k, attrs[k]);
		}
		if(text){
			el.textContent = text;
		}
		parent.appendChild(el);
	}

	var h = document.getElementById("ruler-h");
	var v = document.getElementById("ruler-v");
	var dh = "", dv = "";
	for(var i = -35; i < 230; i++){
		var x = 175 + i*step/10;
		if(x > 34 && x < 1300){
			dh += "M"+x+" 12v-"+(i%10 == 0 ? 4 : i%5 == 0 ? 3 : 1.5);
		}
		var y = 573 - i*step/10;
		if(y > 105 && y < 700){
			dv += "M12 "+y+"h-"+(i%10 == 0 ? 4 : i%5 == 0 ? 3 : 1.5);
		}
	}
	add(h, "path", {d: dh, "class": "tick"});
	add(v, "path", {d: dv, "class": "tick"});
	for(var n = -3; n <= 22; n++){
		add(h, "text", {x: 175 + n*step, y: 7, "class": "num"}, String(Math.abs(n*20)));
	}
	add(h, "text", {x: 1004, y: 7, "class": "num unit"}, "миллиметры");
	for(var m = 0; m <= 13; m++){
		var my = 573 - m*step;
		add(v, "text", {x: 6, y: my, transform: "rotate(-90 6 "+my+")", "class": "num"}, String(m*20));
	}
	add(v, "text", {x: 6, y: 616, transform: "rotate(-90 6 616)", "class": "num unit"}, "миллиметры");

	var colors = ["#fff","#111","#333","#484848","#5c5c5c","#777","#929292","#a8a8a8","#bcbcbc","#cecece","#dedede","#fff",
		"#3a2f9c","#1a9bd0","#1fa650","#fbdf3a","#dd2b24","#dc1a88","#a84888","#ef7d22","#f8b8b0","#7c705e","#dcd6f4","#b3a7da",
		"#6f8fd0","#8a68bb","#9480b0","#4d6389","#5a4e68","#6b7f90","#1a98cc","#a8dcf4","#b4ccd8","#8c9ca8","#687680","#3c4c4c",
		"#5c7870","#428c70","#6c8c84","#50a890","#62a468","#76dce0","#54a8b4","#b8ccac","#f0f8dc"];
	var box = document.getElementById("swatches");
	for(var c = 0; c < colors.length; c++){
		var b = document.createElement("i");
		b.style.background = colors[c];
		if(c == 0){
			b.className = "none";
			b.style.background = "";
		}
		box.appendChild(b);
	}
</script>
</body>
</html>
```
FILE: styles.css
```css
*{
	box-sizing:border-box;
}
body{
	margin:0;
	height:100vh;
	display:flex;
	flex-direction:column;
	overflow:hidden;
	background:#383838;
	color:#ccc;
	font:8px/10px "Open Sans","Noto Sans",sans-serif;
}
button,input,select{
	margin:0;
	padding:0;
	border:0;
	background:none;
	color:inherit;
	font:inherit;
}
button{
	display:flex;
	align-items:center;
	justify-content:center;
	white-space:nowrap;
}
svg{
	flex:none;
	display:block;
}
.defs{
	display:none;
}
h2,ul{
	margin:0;
	padding:0;
	font:inherit;
	list-style:none;
}

.titlebar{
	height:15px;
	flex:none;
	display:flex;
	align-items:center;
	padding:0 0 0 2px;
	gap:2px;
	border-bottom:1px solid #1c1c1c;
}
.titlebar .name{
	flex:1;
}
.titlebar button{
	width:18px;
}

.menubar{
	height:14px;
	flex:none;
	display:flex;
	align-items:center;
	gap:14px;
	padding-left:7px;
	border-bottom:1px solid #1c1c1c;
}
.menubar a{
	color:#ccc;
	text-decoration:none;
}

.toolbar{
	height:21px;
	flex:none;
	display:flex;
	align-items:center;
	padding-left:2px;
	border-bottom:1px solid #1c1c1c;
}
.btn{
	width:19px;
	height:17px;
}
.btn svg{
	width:13px;
	height:13px;
}
.btn.on{
	background:#262626;
	border:1px solid #181818;
}
.btn.pdf{
	flex-direction:column;
	font-size:6px;
	line-height:6px;
}
.btn.pdf svg{
	height:6px;
}
.caret{
	width:10px;
}
.caret::after{
	content:"";
	border:3px solid transparent;
	border-top-color:#aaa;
	border-bottom:0;
}
.caret.dim{
	opacity:.3;
}
.toolbar .text{
	padding:0 2px 0 5px;
}
.sep{
	width:7px;
	height:16px;
	flex:none;
	background:linear-gradient(#1e1e1e,#1e1e1e) center/1px 100% no-repeat;
}
.zoom{
	width:56px;
	height:15px;
	margin-right:3px;
	padding:0 2px;
	appearance:none;
	border:1px solid #1c1c1c;
	background:
		linear-gradient(45deg,transparent 50%,#aaa 50%) right 5px top 5px/3px 3px no-repeat,
		linear-gradient(-45deg,transparent 50%,#aaa 50%) right 2px top 5px/3px 3px no-repeat,
		linear-gradient(#1c1c1c,#1c1c1c) right 10px top 0/1px 100% no-repeat,
		#2b2b2b;
}

.props{
	height:29px;
	flex:none;
	display:flex;
	align-items:center;
	padding-left:4px;
	border-bottom:1px solid #1c1c1c;
}
.props label{
	display:flex;
	align-items:center;
	gap:1px;
}
.props input{
	width:58px;
	height:11px;
	padding:0 2px;
	background:#2b2b2b;
	border:1px solid #1f1f1f;
}
.props label svg{
	margin-right:1px;
}
.props .sep{
	height:27px;
	width:9px;
}
.angle{
	margin:0 4px 0 2px;
}
.props .angle input{
	width:31px;
	height:17px;
}
.add{
	margin-left:4px;
}

.work{
	flex:1;
	min-height:0;
	display:flex;
	background:#2b2b2b;
}
.toolbox{
	width:22px;
	flex:none;
	padding-top:2px;
	background:#363636;
	border-right:1px solid #1c1c1c;
}
.toolbox button{
	width:18px;
	height:19px;
	margin-left:2px;
}
.toolbox button.on{
	background:#222;
}
.toolbox svg{
	width:13px;
	height:13px;
}
.toolbox hr{
	margin:3px 3px 2px;
	border:0;
	border-top:1px solid #1c1c1c;
}

.document{
	flex:1;
	min-width:0;
	display:flex;
	flex-direction:column;
}
.tabs{
	height:13px;
	flex:none;
	display:flex;
	background:#282828;
}
.tab{
	min-width:88px;
	padding:0 4px;
	justify-content:flex-start;
	background:#383838;
	border-right:1px solid #222;
}
.tab.current{
	min-width:100px;
	background:#0a66cc;
	color:#e8f0fa;
}
.tab.new{
	min-width:14px;
	padding:0;
}
.ruler-h{
	width:100%;
	height:13px;
	background:#262626;
	border-top:1px solid #3c6478;
}
.tick{
	stroke:#888;
	stroke-width:1;
}
.num{
	fill:#aaa;
	font-size:6px;
	text-anchor:middle;
}
.view{
	flex:1;
	min-height:0;
	display:flex;
}
.ruler-v{
	width:12px;
	height:100%;
	background:#262626;
}
.canvas{
	flex:1;
	min-width:0;
	position:relative;
	background:#c6c6c6;
}
.drawing{
	position:absolute;
	width:100%;
	height:100%;
}
.arial{
	font-family:"Liberation Sans",Arial,sans-serif;
}
.b{
	font-weight:bold;
}
.mid{
	text-anchor:middle;
}
.guide{
	fill:none;
	stroke:#5454c4;
	stroke-dasharray:2 2;
}
.crop-bar{
	position:absolute;
	left:4px;
	top:4px;
	display:flex;
}
.crop-bar button{
	width:64px;
	height:19px;
	gap:5px;
	background:#333;
	border-right:1px solid #222;
}
.pages{
	height:16px;
	flex:none;
	display:flex;
	align-items:center;
	background:#363636;
	border-bottom:1px solid #1c1c1c;
}
.pages button{
	width:16px;
	height:15px;
}
.pages .dim{
	color:#666;
}
.count{
	width:35px;
	text-align:center;
}
.pages .page-tab{
	width:73px;
	background:#424242;
}
.doc-palette{
	height:14px;
	flex:none;
	display:flex;
	align-items:center;
	background:#363636;
}
.doc-palette span{
	flex:1;
	text-align:center;
	font-style:italic;
	color:#666;
}
.doc-palette button{
	width:12px;
	color:#777;
}

.docker{
	width:224px;
	flex:none;
	display:flex;
	flex-direction:column;
	padding-left:4px;
	background:#2c2c2c;
	border-left:1px solid #1c1c1c;
}
.docker-head{
	height:14px;
	flex:none;
	display:flex;
	align-items:center;
	padding-left:2px;
}
.docker-head h2{
	flex:1;
}
.docker-head button{
	width:14px;
	color:#888;
}
.docker-body{
	flex:1;
	min-height:0;
	display:flex;
}
.panel{
	flex:1;
	min-width:0;
	display:flex;
	flex-direction:column;
	padding-top:5px;
	border-right:1px solid #39647c;
}
.search{
	height:17px;
	padding:0 2px;
	background:#262626;
	border:1px solid #1a1a1a;
}
.search::placeholder{
	color:#555;
}
.layer-bar{
	height:22px;
	flex:none;
	display:flex;
	align-items:center;
	gap:6px;
	border-bottom:1px solid #1c1c1c;
}
.layer-bar button{
	width:15px;
	height:15px;
}
.layer-bar button svg{
	width:13px;
	height:13px;
}
.layer-bar .on{
	background:#222;
	border:1px solid #111;
}
.layer-bar span{
	flex:1;
	padding-left:4px;
}
.tree{
	flex:1;
}
.tree li{
	height:17px;
	display:flex;
	align-items:center;
	padding-right:3px;
}
.tree .page{
	background:#383838;
	border-bottom:1px solid #1c1c1c;
}
.tree .ruled{
	height:18px;
	border-bottom:1px solid #1c1c1c;
}
.tree .selected{
	background:#003f7d;
}
.tree .child{
	padding-left:19px;
}
.tree .tw{
	width:13px;
	flex:none;
	font-size:6px;
	font-style:normal;
	text-align:center;
}
.tree .page .tw{
	margin-right:6px;
}
.ic{
	width:12px;
	height:12px;
}
.tree span,.tree b{
	flex:1;
}
.ic + span,.ic + b{
	padding-left:12px;
}
.tree em{
	width:3px;
	height:12px;
	margin-left:5px;
}
.lock{
	margin-right:1px;
}
.eye{
	width:32px;
	height:12px;
}
.blue{
	background:#1c1cd0;
}
.black{
	background:#111;
}
.white{
	background:#eee;
}
.panel-foot{
	height:18px;
	flex:none;
	display:flex;
	align-items:center;
	margin-bottom:1px;
	padding-right:4px;
	background:#363636;
}
.panel-foot button{
	width:19px;
}
.panel-foot svg{
	width:12px;
	height:12px;
}
.panel-foot input{
	width:77px;
	height:10px;
	margin-left:auto;
	appearance:none;
	background:
		linear-gradient(#111,#111) center/100% 1px no-repeat,
		linear-gradient(#111,#111) left/1px 8px no-repeat,
		linear-gradient(#111,#111) center/1px 8px no-repeat,
		linear-gradient(#111,#111) right/1px 8px no-repeat;
}
.panel-foot input::-webkit-slider-thumb{
	appearance:none;
	width:4px;
	height:10px;
	background:#444;
	border:1px solid #111;
}
.side-tabs{
	width:15px;
	flex:none;
	display:flex;
	flex-direction:column;
	color:#999;
}
.side-tabs button{
	writing-mode:vertical-rl;
	width:14px;
	padding:4px 0 10px;
	gap:3px;
	justify-content:flex-start;
	background:#404040;
	border-bottom:1px solid #1c1c1c;
}
.side-tabs .current{
	background:#0a66cc;
	color:#a8ccf4;
}
.side-tabs .more,.side-tabs .close{
	height:16px;
	padding:0;
	justify-content:center;
	background:none;
	border:0;
}
.side-tabs .close{
	height:14px;
}
.side-tabs .light{
	background:#5a5a5a;
	color:#aaa;
}
.side-tabs.second{
	width:16px;
	padding-left:1px;
	border-right:1px solid #1c1c1c;
}
.palette{
	width:12px;
	flex:none;
	display:flex;
	flex-direction:column;
	position:relative;
	padding-bottom:38px;
	background:#363636;
}
#swatches{
	flex:1;
	min-height:0;
	display:flex;
	flex-direction:column;
}
#swatches i{
	flex:1;
	border:1px solid rgba(0,0,0,.25);
	border-width:0 0 1px 1px;
}
#swatches .none{
	background:linear-gradient(135deg,transparent 45%,#777 45%,#777 55%,transparent 55%) #fff;
}
.viewer{
	position:absolute;
	right:0;
	bottom:8px;
}

.status{
	height:25px;
	flex:none;
	display:flex;
	align-items:center;
	padding:0 6px;
	border-top:1px solid #1c1c1c;
}
.hint{
	margin:0 10px 0 4px;
}
.coords{
	flex:1;
}
.ink{
	width:134px;
	display:flex;
	align-items:center;
	gap:3px;
}
.ink + .ink{
	width:162px;
}
.status .sep{
	margin-right:5px;
}

.taskbar{
	height:27px;
	flex:none;
	display:flex;
	justify-content:space-between;
	background:#1a1a1a;
	color:#eee;
}
.apps{
	width:524px;
	display:flex;
}
.apps button{
	flex:1;
}
.apps svg{
	width:16px;
	height:16px;
}
.apps .run{
	box-shadow:inset 0 -2px #5a8fb8;
}
.apps .front{
	background:#444;
}
.ps{
	fill:#b8e0f8;
	font-size:8px;
	font-weight:bold;
	text-anchor:middle;
}
.tray{
	display:flex;
	align-items:center;
	gap:2px;
	padding-right:5px;
}
.lang{
	margin:0 6px 0 5px;
}
time{
	text-align:center;
	line-height:12px;
}
```
